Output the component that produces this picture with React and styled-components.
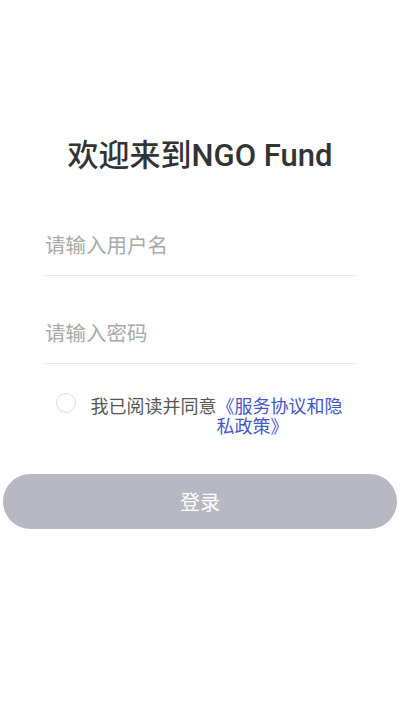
import React, { useState } from 'react';
import styled, { createGlobalStyle } from 'styled-components';

const GlobalStyle = createGlobalStyle`
  html, body {
    margin: 0;
    padding: 0;
    background: #ffffff;
  }
  body {
    font-family: Roboto, "Noto Sans CJK SC", sans-serif;
  }
  * {
    box-sizing: border-box;
  }
`;

const App = () => {
  const [agreed, setAgreed] = useState(false);

  return (
    <Page>
      <GlobalStyle />
      <Title>欢迎来到NGO Fund</Title>
      <Form>
        <Field>
          <Input type="text" placeholder="请输入用户名" />
        </Field>
        <Field>
          <Input type="password" placeholder="请输入密码" />
        </Field>
      </Form>
      <Agreement>
        <Radio $checked={agreed} onClick={() => setAgreed(!agreed)} />
        <AgreeText>我已阅读并同意</AgreeText>
        <PolicyLink>《服务协议和隐私政策》</PolicyLink>
      </Agreement>
      <LoginButton type="button">登录</LoginButton>
    </Page>
  );
};

export default App;

const Page = styled.div`
  min-height: 711px;
  padding-top: 136px;
  display: flex;
  flex-direction: column;
  align-items: center;
`;

const Title = styled.h1`
  margin: 0;
  font-size: 31px;
  line-height: 40px;
  font-weight: 500;
  color: #333333;
  text-align: center;
`;

const Form = styled.div`
  width: 310px;
  margin-top: 12px;
  display: flex;
  flex-direction: column;
`;

const Field = styled.div`
  padding-top: 24px;
  border-bottom: 1px solid #e8e8e8;
`;

const Input = styled.input`
  display: block;
  width: 100%;
  height: 63px;
  border: none;
  outline: none;
  padding: 0 1px 0 0;
  font-family: "Noto Sans CJK SC", sans-serif;
  font-size: 20.5px;
  color: #333333;
  background: transparent;
  &::placeholder {
    color: #a9a9a9;
  }
`;

const Agreement = styled.div`
  margin-top: 29px;
  display: flex;
  align-items: flex-start;
  justify-content: center;
  font-family: "Noto Sans CJK SC", sans-serif;
  font-size: 18px;
  line-height: 20px;
`;

const Radio = styled.span`
  flex: none;
  width: 20px;
  height: 20px;
  border-radius: 50%;
  border: 1px solid ${(p) => (p.$checked ? '#4456c7' : '#dcdce0')};
  background: ${(p) => (p.$checked ? '#4456c7' : '#ffffff')};
  margin-right: 15px;
  cursor: pointer;
`;

const AgreeText = styled.span`
  flex: none;
  padding-top: 2px;
  color: #555555;
`;

const PolicyLink = styled.span`
  width: 128px;
  padding-top: 2px;
  color: #4456c7;
  cursor: pointer;
`;

const LoginButton = styled.button`
  align-self: stretch;
  margin: 39px 3px 0;
  height: 55px;
  border: none;
  border-radius: 28px;
  background: #b8b8c2;
  color: #ffffff;
  font-family: "Noto Sans CJK SC", sans-serif;
  font-size: 20px;
  cursor: pointer;
`;
